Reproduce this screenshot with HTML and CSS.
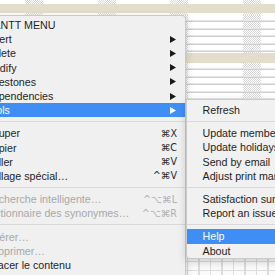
FILE: index.html
```html
<!DOCTYPE html>
<html>
<head>
<meta charset="utf-8">
<link rel="stylesheet" href="styles.css">
</head>
<body>
<div class="canvas">
  <div class="hdr"></div>
  <div class="rows rows-a"></div>
  <div class="sum"></div>
  <div class="rows rows-b"></div>
  <div class="grid"></div>
</div>

<div class="menu main">
  <div class="item"><span class="label">GANTT MENU</span></div>
  <div class="item"><span class="label">Insert</span><svg class="arrow" viewBox="0 0 6 7"><polygon points="0,0 6,3.5 0,7"/></svg></div>
  <div class="item"><span class="label">Delete</span><svg class="arrow" viewBox="0 0 6 7"><polygon points="0,0 6,3.5 0,7"/></svg></div>
  <div class="item"><span class="label">Modify</span><svg class="arrow" viewBox="0 0 6 7"><polygon points="0,0 6,3.5 0,7"/></svg></div>
  <div class="item"><span class="label">Milestones</span><svg class="arrow" viewBox="0 0 6 7"><polygon points="0,0 6,3.5 0,7"/></svg></div>
  <div class="item"><span class="label">Dependencies</span><svg class="arrow" viewBox="0 0 6 7"><polygon points="0,0 6,3.5 0,7"/></svg></div>
  <div class="item active"><span class="label">Tools</span><svg class="arrow" viewBox="0 0 6 7"><polygon points="0,0 6,3.5 0,7"/></svg></div>
  <div class="sep"></div>
  <div class="item"><span class="label">Couper</span><span class="key">⌘X</span></div>
  <div class="item"><span class="label">Copier</span><span class="key">⌘C</span></div>
  <div class="item"><span class="label">Coller</span><span class="key">⌘V</span></div>
  <div class="item"><span class="label">Collage spécial…</span><span class="key">^⌘V</span></div>
  <div class="sep"></div>
  <div class="item disabled"><span class="label">Recherche intelligente…</span><span class="key">^⌥⌘L</span></div>
  <div class="item disabled"><span class="label">Dictionnaire des synonymes…</span><span class="key">^⌥⌘R</span></div>
  <div class="sep"></div>
  <div class="item disabled"><span class="label">Insérer…</span></div>
  <div class="item disabled"><span class="label">Supprimer…</span></div>
  <div class="item"><span class="label">Effacer le contenu</span></div>
</div>

<div class="menu sub">
  <div class="item"><span class="label">Refresh</span></div>
  <div class="sep"></div>
  <div class="item"><span class="label">Update members…</span></div>
  <div class="item"><span class="label">Update holidays…</span></div>
  <div class="item"><span class="label">Send by email</span></div>
  <div class="item"><span class="label">Adjust print margins…</span></div>
  <div class="sep"></div>
  <div class="item"><span class="label">Satisfaction survey</span></div>
  <div class="item"><span class="label">Report an issue</span></div>
  <div class="sep"></div>
  <div class="item active"><span class="label">Help</span></div>
  <div class="item"><span class="label">About</span></div>
</div>
</body>
</html>
```

FILE: styles.css
```css
html, body {
  margin: 0;
  padding: 0;
}

body {
  width: 275px;
  height: 275px;
  overflow: hidden;
  position: relative;
  background: #fff;
  font-family: "Liberation Sans", Arial, "DejaVu Sans", sans-serif;
}

.canvas {
  display: flex;
  flex-direction: column;
  width: 275px;
  height: 275px;
  --mask: repeating-linear-gradient(to right, #fff 0 25px, transparent 25px 43px, #fff 43px 72.7px);
  --dots: repeating-conic-gradient(#d8d8d8 0 25%, #fff 0 50%) 0 0 / 2px 2px;
}

.hdr {
  height: 15px;
  flex: none;
  background:
    linear-gradient(to bottom, transparent 0 4px, #e3ddcc 4px 13px, transparent 13px),
    var(--mask),
    var(--dots);
}

.rows {
  flex: none;
  background:
    repeating-linear-gradient(to bottom, transparent 0 5px, #e6e6e6 5px 6px, #cfcfcf 6px 7px, transparent 7px 7.6px),
    var(--mask),
    var(--dots);
}

.rows-a { height: 38px; }

.sum {
  height: 10px;
  flex: none;
  background: #e3ddcc;
}

.rows-b { height: 190px; }

.grid {
  flex: 1;
  background:
    repeating-linear-gradient(to right, transparent 0 3px, #dcdcdc 3px 4px, transparent 4px 11.5px),
    repeating-linear-gradient(to bottom, transparent 0 8px, #dcdcdc 8px 9px),
    #fbfbfb;
}

/* Menus */
.menu {
  position: absolute;
  box-sizing: border-box;
  background: #f0f0f0;
  border: 1px solid rgba(0, 0, 0, 0.16);
  box-shadow: 0 3px 8px rgba(0, 0, 0, 0.18);
  font-size: 10.7px;
  color: #1e1e1e;
}

.main {
  left: -30px;
  top: 15px;
  width: 216px;
  height: 290px;
  padding-top: 2px;
  border-radius: 0 4px 0 0;
}

.sub {
  left: 186px;
  top: 99px;
  width: 130px;
  padding: 3px 0 0;
  border-radius: 0 0 4px 4px;
  background: #f1f1f1;
}

.item {
  display: flex;
  align-items: center;
  height: 14.2px;
  padding: 0 8px 0 14px;
  white-space: nowrap;
}

.sub .item {
  padding-left: 15.5px;
}

.item.active {
  background: #3f8ef6;
  color: #fff;
}

.item.disabled {
  color: #a8a8a8;
}

.key {
  margin-left: auto;
  font-family: "DejaVu Sans", sans-serif;
  font-size: 9.6px;
  color: #2a2a2a;
}

.disabled .key {
  color: #b0b0b0;
}

.arrow {
  margin-left: auto;
  width: 6px;
  height: 7px;
  margin-right: 1px;
  fill: #1a1a1a;
}

.active .arrow {
  fill: #fff;
}

.sep {
  height: 9px;
  display: flex;
  align-items: center;
}

.sep::after {
  content: "";
  display: block;
  width: 100%;
  height: 1px;
  background: #d9d9d9;
}
```
